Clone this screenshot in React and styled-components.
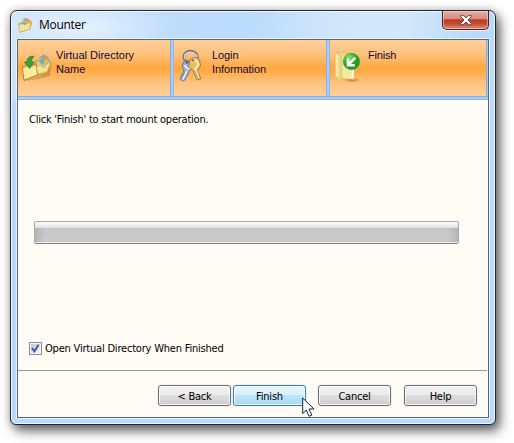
import React from "react";
import styled, { createGlobalStyle, css } from "styled-components";

const GlobalStyle = createGlobalStyle`
  * { box-sizing: border-box; }
  body { margin: 0; background: #fff; overflow: hidden; }
`;

const Desktop = styled.div`
  width: 514px;
  height: 443px;
  padding: 10px 0 0 10px;
  background: #fff;
  overflow: hidden;
  font: 11px/14px "DejaVu Sans Condensed", "DejaVu Sans", sans-serif;
  font-stretch: condensed;
  color: #000;
`;

const Window = styled.main`
  width: 486px;
  height: 415px;
  display: flex;
  flex-direction: column;
  padding: 0 6px 6px;
  border: 1px solid #1d2733;
  border-radius: 7px 7px 6px 6px;
  background:
    radial-gradient(ellipse 90px 26px at 70px 16px, rgba(235, 245, 255, 0.85), transparent),
    linear-gradient(105deg, #cfe3f8 0, #bddcfb 38%, #bbdcfc 48%, #d2e6fa 65%, #d5e7fa 78%, #b9dafa 92%);
  background-size: 100% 100%, 100% 90px;
  background-repeat: no-repeat;
  background-color: #b9dafb;
  box-shadow:
    inset 0 0 0 1px rgba(245, 251, 255, 0.9),
    4px 6px 12px 0 rgba(0, 0, 0, 0.6),
    0 0 7px 2px rgba(0, 0, 0, 0.14);
`;

const TitleBar = styled.header`
  height: 28px;
  flex: none;
  display: flex;
  justify-content: space-between;
`;

const Title = styled.h1`
  margin: 0;
  padding: 6px 0 0 1px;
  display: flex;
  gap: 7px;
  font: 12px/16px "Open Sans", "Noto Sans", sans-serif;
  letter-spacing: -0.3px;
`;

const CloseButton = styled.button`
  width: 47px;
  height: 19px;
  margin-right: 0;
  padding: 0;
  display: flex;
  align-items: center;
  justify-content: center;
  border: 1px solid #5a1c1b;
  border-top: 0;
  border-radius: 0 0 5px 5px;
  background: linear-gradient(#e8aea3 0, #d78a7d 45%, #bd3c26 48%, #bf4b34 70%, #dc9178 100%);
  box-shadow: inset 0 0 0 1px rgba(255, 215, 205, 0.55), 0 1px 0 rgba(255, 255, 255, 0.65);
`;

const Client = styled.section`
  flex: 1;
  width: 472px;
  display: flex;
  flex-direction: column;
  border: 1px solid #54687d;
  background: #fffcf6;
  box-shadow: 0 0 0 1px rgba(235, 247, 255, 0.85);
`;

const Steps = styled.ol`
  height: 60px;
  margin: 0;
  padding: 0 0 4px;
  flex: none;
  display: grid;
  grid-template-columns: 156px 156px 158px;
  list-style: none;
  background: linear-gradient(#86aee6 0 1px, #aacbf6 1px 3px, #8fb5ea 3px) bottom / 100% 4px no-repeat;
`;

const Step = styled.li`
  display: flex;
  padding: 8px 0 0 3px;
  gap: 3px;
  color: #11093f;
  font: 11px/14px "Liberation Sans", Arial, sans-serif;
  background:
    linear-gradient(90deg, #86aee6 0 1px, #aacbf6 1px 3px, #8fb5ea 3px) right / ${(p) => (p.$last ? 2 : 4)}px 100% no-repeat,
    linear-gradient(#ffcf98 0, #ffc27d 25%, #ffa941 49%, #ffa941 53%, #ffc481 78%, #ffd19c 100%);
`;

const StepLabel = styled.span`
  width: 100px;
  letter-spacing: ${(p) => p.$spacing || "0"};
`;

const Body = styled.div`
  height: 271px;
  flex: none;
  display: flex;
  flex-direction: column;
  padding: 13px 0 0 11px;
  border-bottom: 1px solid #9b9a98;
  margin-right: 1px;
`;

const Message = styled.p`
  margin: 0;
  letter-spacing: ${(p) => p.$spacing || "0"};
  white-space: nowrap;
`;

const Progress = styled.div`
  width: 425px;
  height: 23px;
  margin: 94px 0 0 5px;
  border: 1px solid #aaa;
  border-bottom-color: #858585;
  border-radius: 2px;
  background:
    linear-gradient(90deg, rgba(150, 150, 150, 0.4), transparent 10px calc(100% - 10px), rgba(150, 150, 150, 0.4)) 0 6px / 100% 14px no-repeat,
    linear-gradient(#eee 0, #fafafa 1px, #dedede 6px, #c8c8c8 6px, #cacaca 20px, #eee 20px);
`;

const Option = styled.label`
  margin-top: 97px;
  height: 15px;
  display: flex;
  align-items: center;
  gap: 3px;
`;

const CheckBox = styled.span`
  width: 13px;
  height: 13px;
  display: flex;
  border: 1px solid #8b8f92;
  background: linear-gradient(135deg, #b9c1ce, #f1f3f5 85%);
  box-shadow: inset 0 0 0 1px #f5f5f5;
`;

const Actions = styled.footer`
  flex: 1;
  display: flex;
  padding: 14px 0 0 140px;
`;

const activeButton = css`
  border-color: #3c7fb1;
  background: linear-gradient(#e9f6fd 0, #d9f0fc 48%, #bee6fd 50%, #a7d9f5 100%);
`;

const Button = styled.button`
  width: 73px;
  height: 21px;
  margin: 0 ${(p) => p.$gap || 0}px 0 0;
  padding: 1px 0 0;
  font: inherit;
  line-height: 17px;
  letter-spacing: -0.22px;
  color: #000;
  border: 1px solid #707070;
  border-radius: 3px;
  background: linear-gradient(#f3f3f3 0, #ebebeb 48%, #dddddd 50%, #cfcfcf 100%);
  box-shadow: inset 0 0 0 1px rgba(255, 255, 255, 0.75), 0 0 0 1px rgba(235, 237, 240, 0.8);
  ${(p) => p.$active && activeButton}
`;

const Pointer = styled.svg`
  position: absolute;
  left: 302px;
  top: 397px;
`;

function GlobeFolder() {
  return (
    <svg width="14" height="16" viewBox="0 0 14 16">
      <path d="M.8 6.8l3-1.4 1 1L12 3l1.6 3-2 6.4L1.6 15.2z" fill="#edc451" stroke="#aa853b" strokeWidth=".6" />
      <circle cx="7.8" cy="5.6" r="4.4" fill="#8bd2ef" />
      <path d="M5 2.4c2-2 5.6-1 6.8 1.8L8 5z" fill="#f69248" />
      <path d="M8 5l4 0-1.5 4H7z" fill="#f2b43a" />
      <path d="M3.6 6L8 5 7 9z" fill="#63bd80" />
      <path d="M1 8.4l4-1.4 1 1.3 6-2.4-.8 6.3-9.5 2.6z" fill="#fae69a" fillOpacity=".9" />
    </svg>
  );
}

function FoldersIcon() {
  return (
    <svg width="32" height="36" viewBox="0 0 32 36">
      <path d="M3 33l14-4 7-3 6-12-1 14-12 3z" fill="#855b21" opacity=".35" />
      <path d="M14 14l5-2 2 2 7-2 2.6 4-4.4 9-12 3z" fill="#f0cf62" stroke="#a4803a" strokeWidth=".8" />
      <path d="M17 12l6-6 6 6-6 8z" fill="#b9d9ec" stroke="#87aabd" strokeWidth=".7" />
      <circle cx="23" cy="12" r="5" fill="#82b8d5" />
      <path d="M19.5 9.5C21 7 25 7 26.5 10L23 12z" fill="#e98f48" />
      <path d="M23 12h4.6c0 2-2 4.4-4.6 4.4z" fill="#eebc42" />
      <path d="M18.6 12H23l-1 4.4z" fill="#65b785" />
      <path d="M14.5 18.5l5-1 3.5 2.5 4-5.2 2-.3-3 9-11 3z" fill="#f8e68c" stroke="#c49c43" strokeWidth=".5" />
      <path d="M1.5 19l5-2.4 1.5 2 7-3 1.6 11.6L3 32.4z" fill="#e9c75b" stroke="#967332" strokeWidth=".8" />
      <path d="M2 20.6l5.5-1.6 1 1.2L15 18l.8 8.6-12.3 4.6z" fill="#fdec9d" />
      <path d="M13 8.5C8.5 7.5 6 10 6 14H3.5l5 6.4 4.4-6.6-2.6.4c0-2.2.7-4 2.7-5.7z" fill="#38a336" stroke="#247b28" strokeWidth=".7" />
    </svg>
  );
}

function KeysIcon() {
  return (
    <svg width="32" height="36" viewBox="-1 0 32 36">
      <path d="M7.2 13C1 1 20 0 19.5 10c0 3-2 4.5-4.5 5" fill="none" stroke="#77737b" strokeWidth="2.8" strokeLinecap="round" />
      <path d="M7.2 11.5C3 2.3 18.7 2 19.2 9.5" fill="none" stroke="#d3d9e6" strokeWidth="1.3" />
      <path d="M5 15c1-3 7-3.5 9 0l.6 4.5-3 3.5-4.6 9-2.6 1-2.4-2 4-8.7L4 19z" fill="#9dabd5" stroke="#686a83" strokeWidth=".8" />
      <path d="M6.8 17c1 3.5 4 4 5.4 3.2M9 22.5L4.8 31.5" stroke="#edf2fc" strokeWidth="1.7" fill="none" />
      <path d="M7.5 23L3.6 30" stroke="#7d83a2" strokeWidth=".8" />
      <path d="M12 12c2-3 7-3.6 9.6 0l1 6-3 4 3.2 9-3.8 1-4.4-10-4-3z" fill="#e3bf69" stroke="#957239" strokeWidth=".8" />
      <path d="M13.5 14l4-2 3 4-3 4.5L20.7 30" stroke="#fff0b4" strokeWidth="1.7" fill="none" />
      <path d="M17 23l3 7" stroke="#bc8c40" strokeWidth=".7" />
      <circle cx="9" cy="14.3" r="1.5" fill="#65647d" />
      <circle cx="15" cy="12.4" r="1.2" fill="#866936" />
    </svg>
  );
}

function FinishIcon() {
  return (
    <svg width="32" height="36" viewBox="0 0 32 36">
      <defs>
        <linearGradient id="folder" x2="1"><stop stopColor="#fff4b8" /><stop offset="1" stopColor="#dfc974" /></linearGradient>
        <radialGradient id="green" cx=".35" cy=".25"><stop stopColor="#8be675" /><stop offset=".55" stopColor="#40bf34" /><stop offset="1" stopColor="#229c22" /></radialGradient>
        <radialGradient id="shade"><stop stopColor="#9d6020" stopOpacity=".65" /><stop offset="1" stopColor="#9d6020" stopOpacity="0" /></radialGradient>
      </defs>
      <ellipse cx="19" cy="32" rx="9" ry="2.8" fill="url(#shade)" />
      <path d="M3 5l9-.8 1.5 1.8 7 .4V31L9 30z" fill="#e9d890" stroke="#ccb160" strokeWidth=".5" />
      <path d="M9 9l12-1v23.5L9 30z" fill="#f7e8a2" />
      <path d="M2.4 5.2L9 9v25l-6.6-6z" fill="url(#folder)" stroke="#d9bf72" strokeWidth=".5" />
      <path d="M19.5 21v8" stroke="#fff" strokeWidth="1.5" />
      <circle cx="18.5" cy="13.5" r="8.3" fill="url(#green)" stroke="#2f9d2d" strokeWidth=".5" />
      <path d="M22.3 9.7L16 16M15 10.5v6.7h6.7" fill="none" stroke="#fff" strokeWidth="2.6" />
    </svg>
  );
}

export default function App() {
  return (
    <>
      <GlobalStyle />
      <Desktop>
        <Window>
          <TitleBar>
            <Title><GlobeFolder />Mounter</Title>
            <CloseButton aria-label="Close">
              <svg width="12" height="10" viewBox="0 0 12 10">
                <path d="M.7.7h3.2L6 3 8.1.7h3.2v1L8 5l3.3 3.3v1H8.1L6 7 3.9 9.3H.7v-1L4 5 .7 1.7z" fill="#fff" stroke="#5d3b40" strokeWidth=".9" />
              </svg>
            </CloseButton>
          </TitleBar>
          <Client>
            <Steps>
              <Step><FoldersIcon /><StepLabel>Virtual Directory<br />Name</StepLabel></Step>
              <Step><KeysIcon /><StepLabel $spacing="-0.1px">Login<br />Information</StepLabel></Step>
              <Step $last><FinishIcon /><StepLabel $spacing="-0.2px">Finish</StepLabel></Step>
            </Steps>
            <Body>
              <Message $spacing="-0.23px">Click 'Finish' to start mount operation.</Message>
              <Progress />
              <Option>
                <CheckBox>
                  <svg width="11" height="11" viewBox="0 0 11 11"><path d="M2 5l2.4 3.3L8.6 1.8" fill="none" stroke="#3e57a0" strokeWidth="2" /></svg>
                </CheckBox>
                <Message $spacing="-0.2px">Open Virtual Directory When Finished</Message>
              </Option>
            </Body>
            <Actions>
              <Button $gap={2}>&lt; Back</Button>
              <Button $active $gap={12}>Finish</Button>
              <Button $gap={13}>Cancel</Button>
              <Button>Help</Button>
            </Actions>
          </Client>
        </Window>
        <Pointer width="14" height="21" viewBox="0 0 14 21">
          <path d="M.7 1v15.5l3.6-3.4 2.8 6.2 2.7-1.2L7 12h5z" fill="#fff" stroke="#171f32" strokeWidth="1" />
        </Pointer>
      </Desktop>
    </>
  );
}
